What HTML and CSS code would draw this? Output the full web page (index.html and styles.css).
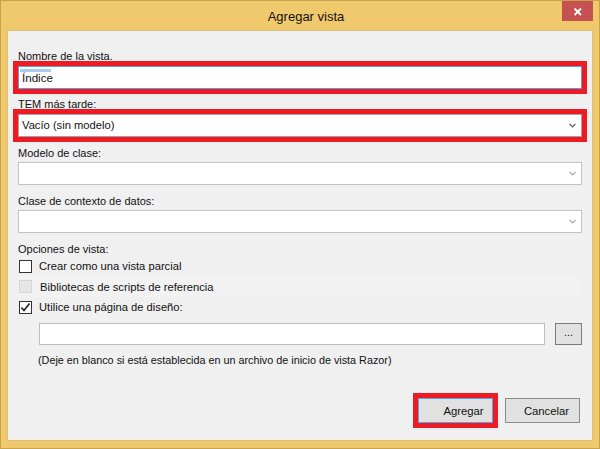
FILE: index.html
```html
<!DOCTYPE html>
<html lang="es">
<head>
<meta charset="utf-8">
<title>Agregar vista</title>
<link rel="stylesheet" href="styles.css">
</head>
<body>
<div class="window">
  <div class="titlebar">
    <div class="title">Agregar vista</div>
    <div class="close">
      <svg width="31" height="20" viewBox="0 0 31 20"><path d="M12.5 7.5 L19 14 M19 7.5 L12.5 14" stroke="#fff" stroke-width="1.8" fill="none"/></svg>
    </div>
  </div>
  <div class="client">
    <div class="label">Nombre de la vista.</div>
    <div class="hl">
      <div class="input focus"><span class="sel"></span>Índice</div>
    </div>
    <div class="label l2">TEM más tarde:</div>
    <div class="hl">
      <div class="combo dark"><span>Vacío (sin modelo)</span>
        <svg class="chev" width="7" height="5" viewBox="0 0 7 5"><polyline points="0.5,0.8 3.5,3.8 6.5,0.8" fill="none" stroke="#555" stroke-width="1.2"/></svg>
      </div>
    </div>
    <div class="label l3">Modelo de clase:</div>
    <div class="combo">
      <svg class="chev" width="7" height="5" viewBox="0 0 7 5"><polyline points="0.5,0.8 3.5,3.8 6.5,0.8" fill="none" stroke="#a8a8a8" stroke-width="1.2"/></svg>
    </div>
    <div class="label l4">Clase de contexto de datos:</div>
    <div class="combo">
      <svg class="chev" width="7" height="5" viewBox="0 0 7 5"><polyline points="0.5,0.8 3.5,3.8 6.5,0.8" fill="none" stroke="#a8a8a8" stroke-width="1.2"/></svg>
    </div>
    <div class="label l5">Opciones de vista:</div>
    <div class="check r1"><span class="box"></span><span>Crear como una vista parcial</span></div>
    <div class="check r2 disabled"><span class="box"></span><span>Bibliotecas de scripts de referencia</span></div>
    <div class="check r3"><span class="box">
      <svg width="11" height="11" viewBox="0 0 11 11"><polyline points="1.5,5.5 4,8.5 9.5,1.5" fill="none" stroke="#222" stroke-width="1.6"/></svg>
    </span><span>Utilice una página de diseño:</span></div>
    <div class="layout-row">
      <div class="input plain"></div>
      <div class="btn dots">...</div>
    </div>
    <div class="help">(Deje en blanco si está establecida en un archivo de inicio de vista Razor)</div>
    <div class="actions">
      <div class="hl hl-btn"><div class="btn default">Agregar</div></div>
      <div class="btn cancel">Cancelar</div>
    </div>
  </div>
</div>
</body>
</html>
```
FILE: styles.css
```css
* { box-sizing: border-box; }
html, body { margin: 0; padding: 0; }
body {
  width: 600px;
  height: 449px;
  overflow: hidden;
  font-family: "Liberation Sans", Arial, sans-serif;
  font-size: 11px;
  color: #111;
}
.window {
  width: 600px;
  height: 449px;
  background: #f1c96d;
  border: 1px solid #c8a24e;
  display: flex;
  flex-direction: column;
}
.titlebar {
  height: 29px;
  display: grid;
  grid-template-columns: 1fr;
  grid-template-rows: 29px;
}
.title {
  grid-area: 1 / 1;
  justify-self: stretch;
  text-align: center;
  padding-left: 12px;
  font-size: 13px;
  line-height: 29px;
  padding-top: 1px;
  color: #111;
}
.close {
  grid-area: 1 / 1;
  justify-self: end;
  align-self: start;
  width: 31px;
  height: 20px;
  margin-right: 6px;
  background: #c75050;
  display: flex;
}
.client {
  margin: 0 6px;
  height: 411px;
  background: #f0f0f0;
  border: 1px solid #dcbf78;
  padding: 19px 10px 12px 10px;
  display: flex;
  flex-direction: column;
}
.label {
  line-height: 13px;
  height: 13px;
  white-space: nowrap;
}
.l2 { margin-top: 4px; }
.l3 { margin-top: 5px; }
.l4 { margin-top: 10px; }
.l5 { margin-top: 10px; }
.hl {
  margin: -2px -5px 0 -5px;
  border: 5px solid #ed1c24;
}
.input, .combo {
  height: 23px;
  background: #fff;
  border: 1px solid #b9b9b9;
  font-size: 11.6px;
  line-height: 21px;
  padding-left: 3px;
  position: relative;
}
.input.focus { border-color: #5c9de0; }
.sel {
  position: absolute;
  left: 1px;
  top: 2px;
  width: 31px;
  height: 3px;
  background: #a8cbf0;
}
.combo {
  margin-top: 2px;
  display: flex;
  align-items: center;
  justify-content: space-between;
  padding-right: 5px;
  border-color: #c3c3c3;
}
.hl .combo { margin-top: 0; }
.combo.dark { border-color: #a3a3a3; font-size: 11.2px; }
.combo span { line-height: 21px; }
.chev { margin-left: auto; }
.check {
  display: flex;
  align-items: center;
  margin-left: 1px;
  height: 20px;
  white-space: nowrap;
  font-size: 11.2px;
}
.check.r2 { height: 21px; background: #f2f2f2; margin-right: 0; }
.box {
  width: 13px;
  height: 13px;
  border: 1px solid #333;
  background: #fff;
  margin-right: 7px;
  display: flex;
  align-items: center;
  justify-content: center;
  flex: none;
}
.disabled .box { background: #e6e6e6; border-color: #d4d4d4; margin-right: 8px; }
.layout-row {
  margin-top: 6px;
  display: flex;
  gap: 10px;
  height: 22px;
  padding-left: 21px;
}
.input.plain {
  flex: 1;
  height: 22px;
  border-color: #bdbdbd;
}
.btn {
  background: #e1e1e1;
  border: 1px solid #adadad;
  height: 25px;
  width: 75px;
  display: flex;
  align-items: center;
  justify-content: center;
  font-size: 11.3px;
  color: #111;
}
.btn.dots {
  width: 27px;
  height: 22px;
  border-color: #7a7a7a;
  padding-bottom: 4px;
  font-size: 11px;
}
.help {
  margin-top: 9px;
  margin-left: 20px;
  line-height: 13px;
  white-space: nowrap;
  font-size: 10.8px;
}
.actions {
  margin-top: auto;
  display: flex;
  justify-content: flex-end;
  align-items: center;
  gap: 7px;
  padding-right: 2px;
}
.hl-btn { margin: 0; }
.btn.default { border-color: #5ba1e6; padding-left: 16px; }
.btn.cancel { border-color: #8a8a8a; padding-left: 8px; }
```
